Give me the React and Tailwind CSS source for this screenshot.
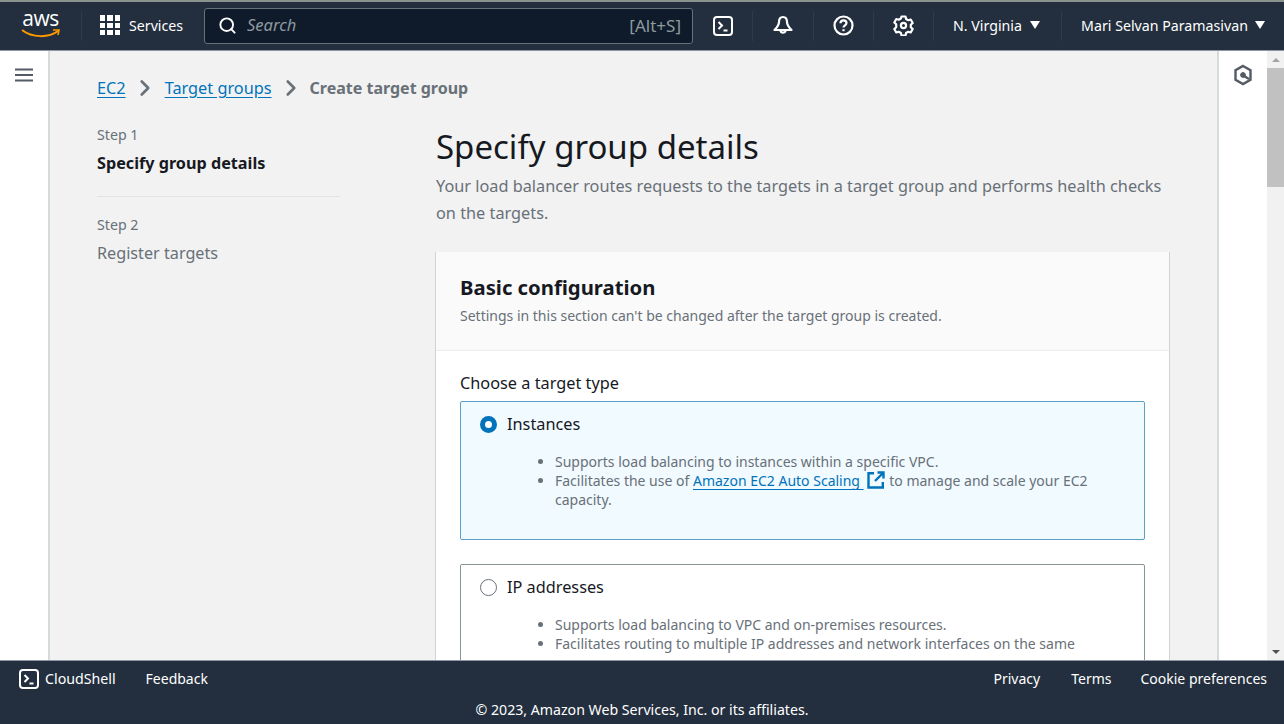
import React from 'react';
import { Search, ChevronRight } from 'lucide-react';

const TerminalIcon = ({ size = 20 }) => (
  <svg width={size} height={size} viewBox="0 0 20 20" fill="none" stroke="currentColor" strokeWidth="2">
    <rect x="1" y="1" width="18" height="18" rx="3" />
    <path d="M5.500 6l3.500 3.500-3.500 3.500M10.500 14.500h4" />
  </svg>
);

const BellIcon = () => (
  <svg width="22" height="22" viewBox="0 0 22 22" fill="none" stroke="currentColor" strokeWidth="2.200" strokeLinejoin="round">
    <path d="M11 2c-3 0-4 2.500-4 5 0 3-1.500 5-4.500 8h17c-3-3-4.500-5-4.500-8 0-2.500-1-5-4-5z" />
    <path d="M8.300 15.500a2.800 2.800 0 0 0 5.400 0" />
  </svg>
);

const HelpIcon = () => (
  <svg width="21" height="21" viewBox="0 0 21 21" fill="none" stroke="currentColor" strokeWidth="2.200">
    <circle cx="10.500" cy="10.500" r="9" />
    <path d="M7.500 8.200c0-1.900 1.400-2.900 3-2.900s3 1 3 2.700c0 2.300-3 2.300-3 4.500" />
    <path d="M10.500 14.200v2" />
  </svg>
);

const GearIcon = () => (
  <svg width="21" height="21" viewBox="0 0 21 21" fill="none" stroke="currentColor" strokeWidth="2.200" strokeLinejoin="round">
    <path d="M8.500 1.500h4l.6 2.500 2.100 1.200 2.500-.7 2 3.500-1.900 1.800v2.400l1.900 1.800-2 3.500-2.500-.7-2.100 1.200-.6 2.500h-4l-.6-2.500-2.100-1.200-2.500.7-2-3.500 1.900-1.800V9.300L1.300 7.500l2-3.500 2.500.7 2.100-1.200z" />
    <circle cx="10.500" cy="10.500" r="2.600" />
  </svg>
);

const NewTabIcon = () => (
  <svg className="inline align-[-3px] ml-[3px] mr-[1px]" width="18" height="18" viewBox="0 0 18 18" fill="none" stroke="#0073bb" strokeWidth="2.400">
    <path d="M7 2.200H1.500v14.300H15.800V11" />
    <path d="M10.500 1.500h6V7.500M16.500 1.500L8 10" />
  </svg>
);

const MenuIcon = () => (
  <svg width="18" height="14" viewBox="0 0 18 14" fill="none" stroke="#545b64" strokeWidth="2.200">
    <path d="M0 1.500h18M0 7h18M0 12.500h18" />
  </svg>
);

const GridIcon = () => (
  <div className="grid grid-cols-3 gap-[2px] w-[20px] h-[20px]">
    {[0, 1, 2, 3, 4, 5, 6, 7, 8].map((i) => (
      <div key={i} className="bg-white w-[5.300px] h-[5.300px]" />
    ))}
  </div>
);

const AwsLogo = () => (
  <div className="relative w-[40px] h-[36px] text-white">
    <div className="text-[21px] leading-[20px] tracking-[-0.5px] text-center font-['Open_Sans',sans-serif]">aws</div>
    <svg className="absolute left-0 top-[20px]" width="40" height="12" viewBox="0 0 40 12" fill="none" stroke="#f90" strokeWidth="2">
      <path d="M1 2c10 8 27 8 36 1" />
      <path d="M32 2h6l-1 5" strokeWidth="1.600" />
    </svg>
  </div>
);

const Divider = () => <div className="w-px h-[30px] bg-[#2f3a4c]" />;

const Caret = () => <span className="w-0 h-0 border-x-[5px] border-x-transparent border-t-[8px] border-t-white" />;

const Bullet = ({ children }) => (
  <li className="text-[14px] leading-[19px] text-[#687078]">{children}</li>
);

const TopBar = () => (
  <header className="h-[51px] shrink-0 bg-[#232f3e] border-t-2 border-t-[#8a948f] border-b border-b-[#8d97a3] flex items-center text-white text-[14.200px] pb-[1px]">
    <div className="w-[81px] flex justify-center"><AwsLogo /></div>
    <Divider />
    <div className="flex items-center gap-[9px] ml-[18px] w-[104px]">
      <GridIcon />
      <span>Services</span>
    </div>
    <div className="w-[489px] h-[36px] bg-[#0f1b2a] border border-[#687078] rounded-[3px] flex items-center pl-[13px] pr-[11px]">
      <Search size={19} strokeWidth={2.400} />
      <span className="italic text-[#8d9a9f] ml-[10px] text-[16.500px]">Search</span>
      <span className="ml-auto text-[#8d9a9f] text-[17px]">[Alt+S]</span>
    </div>
    <div className="w-[59px] flex justify-center"><TerminalIcon /></div>
    <Divider />
    <div className="w-[60px] flex justify-center"><BellIcon /></div>
    <Divider />
    <div className="w-[59px] flex justify-center"><HelpIcon /></div>
    <Divider />
    <div className="w-[59px] flex justify-center"><GearIcon /></div>
    <Divider />
    <div className="w-[127px] flex items-center justify-center gap-[8px] pr-[2px]">
      <span>N. Virginia</span>
      <Caret />
    </div>
    <Divider />
    <div className="flex-1 flex items-center justify-center gap-[7px]">
      <span>Mari Selvan Paramasivan</span>
      <Caret />
    </div>
  </header>
);

const Footer = () => (
  <footer className="h-[64px] shrink-0 bg-[#232f3e] border-t border-t-[#8d97a3] text-white text-[14px] relative">
    <div className="flex items-center h-[36px] pl-[19px] pr-[17px] leading-[20px]">
      <TerminalIcon />
      <span className="ml-[6px] text-[14.200px]">CloudShell</span>
      <span className="ml-[30px]">Feedback</span>
      <span className="ml-auto">Privacy</span>
      <span className="ml-[31px]">Terms</span>
      <span className="ml-[29px]">Cookie preferences</span>
    </div>
    <div className="text-center leading-[20px] mt-[3px] text-[14.150px]">© 2023, Amazon Web Services, Inc. or its affiliates.</div>
  </footer>
);

const Breadcrumbs = () => (
  <nav className="flex items-center text-[16.300px] h-[24px]">
    <a className="text-[#0073bb] underline underline-offset-[3px]">EC2</a>
    <ChevronRight size={26} strokeWidth={2.400} className="text-[#687078] mx-[6.500px]" />
    <a className="text-[#0073bb] underline underline-offset-[3px]">Target groups</a>
    <ChevronRight size={26} strokeWidth={2.400} className="text-[#687078] mx-[6px]" />
    <span className="font-bold text-[#687078] text-[16px]">Create target group</span>
  </nav>
);

const StepNav = () => (
  <aside className="w-[243px] shrink-0 mt-[1px]">
    <div className="text-[14.200px] leading-[20px] text-[#687078]">Step 1</div>
    <div className="text-[16.200px] leading-[24px] font-bold text-[#16191f] mt-[6px]">Specify group details</div>
    <div className="h-px bg-[#e1e4e4] mt-[21px]" />
    <div className="text-[14.200px] leading-[20px] text-[#687078] mt-[18px]">Step 2</div>
    <div className="text-[16.200px] leading-[24px] text-[#687078] mt-[6px]">Register targets</div>
  </aside>
);

const Radio = ({ checked }) =>
  checked ? (
    <span className="w-[17px] h-[17px] rounded-full border-[5px] border-[#0073bb] bg-white" />
  ) : (
    <span className="w-[17px] h-[17px] rounded-full border-[1.500px] border-[#687078] bg-white" />
  );

const TargetOption = ({ checked, label, className, children }) => (
  <div className={className}>
    <div className="flex items-center gap-[10px] h-[24px]">
      <Radio checked={checked} />
      <span className="text-[16.300px] text-[#16191f]">{label}</span>
    </div>
    <ul className="list-disc pl-[75px] mt-[16px] pr-[40px]">{children}</ul>
  </div>
);

const App = () => (
  <div className="h-[724px] w-[1284px] overflow-hidden flex flex-col font-['Noto_Sans',sans-serif] bg-white">
    <TopBar />
    <div className="flex-1 flex min-h-0">
      <div className="w-[50px] shrink-0 bg-white border-r-2 border-r-[#d5dbdb] pl-[15px] pt-[17px]">
        <MenuIcon />
      </div>
      <main className="flex-1 min-w-0 bg-[#f2f2f2] overflow-hidden pl-[47px] pt-[25px]">
        <Breadcrumbs />
        <div className="flex mt-[24px]">
          <StepNav />
          <div className="ml-[96px] w-[733px]">
            <h1 className="text-[33px] leading-[40px] text-[#16191f] mt-[3px]">Specify group details</h1>
            <p className="text-[16.300px] leading-[27px] text-[#687078] mt-[6px] w-[730px]">
              Your load balancer routes requests to the targets in a target group and performs health checks on the targets.
            </p>
            <section className="bg-white mt-[25px] shadow-[-1px_0_0_#d0d3d3,1px_0_0_#d0d3d3] h-[500px]">
              <div className="bg-[#fafafa] h-[99px] border-b border-b-[#eaeded] px-[24px] pt-[20px]">
                <h2 className="text-[20.300px] leading-[30px] font-bold text-[#16191f]">Basic configuration</h2>
                <p className="text-[14px] leading-[20px] text-[#687078] mt-[4px]">Settings in this section can't be changed after the target group is created.</p>
              </div>
              <div className="px-[24px] pt-[20px]">
                <div className="text-[16.300px] leading-[24px] text-[#16191f]">Choose a target type</div>
                <TargetOption
                  checked
                  label="Instances"
                  className="mt-[6px] h-[139px] border border-[#5c9fcb] rounded-[2px] bg-[#f1faff] pl-[19px] pt-[10px]"
                >
                  <Bullet>Supports load balancing to instances within a specific VPC.</Bullet>
                  <Bullet>
                    Facilitates the use of{' '}
                    <a className="text-[#0073bb] underline underline-offset-[3px]">Amazon EC2 Auto Scaling </a>
                    <NewTabIcon />{' '}
                    to manage and scale your EC2 capacity.
                  </Bullet>
                </TargetOption>
                <TargetOption
                  label="IP addresses"
                  className="mt-[24px] h-[160px] border border-[#879596] rounded-[2px] bg-white pl-[19px] pt-[10px]"
                >
                  <Bullet>Supports load balancing to VPC and on-premises resources.</Bullet>
                  <Bullet>Facilitates routing to multiple IP addresses and network interfaces on the same</Bullet>
                </TargetOption>
              </div>
            </section>
          </div>
        </div>
      </main>
      <div className="w-[50px] shrink-0 bg-white border-l-2 border-l-[#d5dbdb] flex justify-center pt-[13px]">
        <svg width="20" height="22" viewBox="0 0 20 22" fill="none" stroke="#545b64" strokeWidth="2.400">
          <path d="M10 2l7.500 4.300v9.400L10 20l-7.500-4.300V6.300z" />
          <circle cx="10" cy="11" r="2.400" fill="#545b64" strokeWidth="1" />
          <path d="M11 12l5 3" />
        </svg>
      </div>
      <div className="w-[17px] shrink-0 bg-[#f1f1f1] flex flex-col items-center">
        <div className="h-[17px] flex items-center justify-center">
          <span className="w-0 h-0 border-x-[4px] border-x-transparent border-b-[4px] border-b-[#a3a3a3]" />
        </div>
        <div className="w-full h-[119px] bg-[#c1c1c1]" />
        <div className="mt-auto h-[17px] flex items-center justify-center">
          <span className="w-0 h-0 border-x-[4px] border-x-transparent border-t-[4px] border-t-[#505050]" />
        </div>
      </div>
    </div>
    <Footer />
  </div>
);

export default App;
